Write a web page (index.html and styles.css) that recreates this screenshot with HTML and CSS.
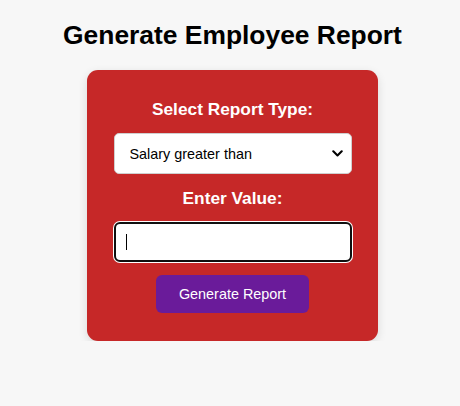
FILE: index.html
```html
<!DOCTYPE html>
<html lang="en">
<head>
<meta charset="utf-8">
<title>Generate Employee Report</title>
<link rel="stylesheet" href="styles.css">
</head>
<body>
  <h1 class="title">Generate Employee Report</h1>
  <form class="card">
    <label class="label" for="type">Select Report Type:</label>
    <div class="select-wrap">
      <select id="type" class="select">
        <option>Salary greater than</option>
        <option>Salary less than</option>
        <option>Department</option>
      </select>
      <svg class="chevron" width="11" height="7" viewBox="0 0 11 7" aria-hidden="true">
        <path d="M1.3 1.3 L5.5 5.4 L9.7 1.3" fill="none" stroke="#000" stroke-width="2.1" stroke-linecap="round" stroke-linejoin="round"/>
      </svg>
    </div>
    <label class="label" for="value">Enter Value:</label>
    <div class="input-wrap">
      <input id="value" class="input is-focused" type="text">
      <span class="caret"></span>
    </div>
    <button type="button" class="btn">Generate Report</button>
  </form>
</body>
</html>
```

FILE: styles.css
```css
* { box-sizing: border-box; }

body {
  margin: 0;
  padding: 20px 0 0 5px;
  background: #f7f7f7;
  font-family: "Liberation Sans", Arial, sans-serif;
  color: #000;
}

.title {
  margin: 0 0 20px;
  font-size: 26.4px;
  line-height: 30px;
  font-weight: bold;
  text-align: center;
}

.card {
  width: 291px;
  margin: 0 auto;
  background: #c62828;
  border-radius: 11px;
  padding: 29px 0 28px;
  display: flex;
  flex-direction: column;
  align-items: center;
  gap: 14px;
  box-shadow: 0 3px 10px rgba(0, 0, 0, 0.12);
}

.label {
  color: #fff;
  font-weight: bold;
  font-size: 17.3px;
  line-height: 20px;
}

.select-wrap,
.input-wrap {
  position: relative;
  width: 238px;
}

.select {
  -webkit-appearance: none;
  appearance: none;
  display: block;
  width: 100%;
  height: 41px;
  margin: 0;
  padding: 0 30px 0 15px;
  border: 1px solid #cfcfcf;
  border-radius: 5px;
  background: #fff;
  font-family: "Liberation Sans", Arial, sans-serif;
  font-size: 14.4px;
  color: #000;
}

.chevron {
  position: absolute;
  right: 9px;
  top: 17px;
  pointer-events: none;
}

.input {
  display: block;
  width: 100%;
  height: 40px;
  margin: 0;
  padding: 0 12px;
  border: 2px solid #101010;
  border-radius: 6px;
  background: #fff;
  font-family: "Liberation Sans", Arial, sans-serif;
  font-size: 14.4px;
  outline: none;
}

.input.is-focused {
  box-shadow: 0 0 0 1px #fff;
}

.caret {
  position: absolute;
  left: 12px;
  top: 12px;
  width: 1px;
  height: 16px;
  background: #000;
}

.input-wrap + .btn { margin-top: -1px; }

.btn {
  height: 38px;
  padding: 0 22.5px;
  border: none;
  border-radius: 6px;
  background: #6a1b9a;
  color: #fff;
  font-family: "Liberation Sans", Arial, sans-serif;
  font-size: 14.4px;
  cursor: pointer;
}
```
